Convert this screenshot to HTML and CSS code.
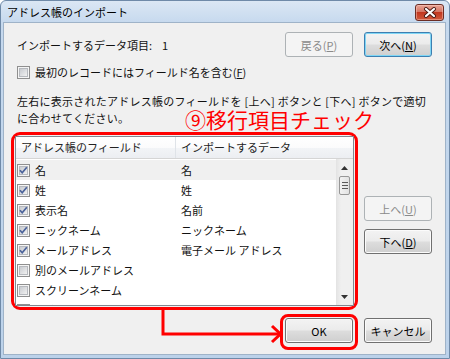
FILE: index.html
```html
<!DOCTYPE html>
<html lang="ja">
<head>
<meta charset="utf-8">
<link rel="stylesheet" href="styles.css">
</head>
<body>
<div class="win">
  <div class="titlebar">
    <span class="title">アドレス帳のインポート</span>
    <span class="close"><svg width="14" height="11" viewBox="0 0 14 11"><path d="M3 2 L11 9 M11 2 L3 9" stroke="#4a1a14" stroke-width="4" stroke-linecap="round" fill="none"/><path d="M3 2 L11 9 M11 2 L3 9" stroke="#fff" stroke-width="2.2" stroke-linecap="round" fill="none"/></svg></span>
  </div>
  <div class="client">
    <div class="row1">
      <span class="count">インポートするデータ項目:<span class="num">1</span></span>
      <div class="btns">
        <span class="btn dis">戻る(<u>P</u>)</span>
        <span class="btn def">次へ(<u>N</u>)</span>
      </div>
    </div>
    <div class="chkrow"><span class="cb"></span><span>最初のレコードにはフィールド名を含む(<u>F</u>)</span></div>
    <p class="desc">左右に表示されたアドレス帳のフィールドを [上へ] ボタンと [下へ] ボタンで適切<br>に合わせてください。</p>
    <div class="mid">
      <div class="hl">
        <div class="list">
          <div class="lhead">
            <span class="hc">アドレス帳のフィールド</span>
            <span class="hc">インポートするデータ</span>
          </div>
          <div class="lbody">
            <div class="rows">
              <div class="row sel"><span class="c1"><span class="cb"><svg viewBox="0 0 13 13"><path d="M3 6.3 L5.2 8.8 L9.8 3.2" stroke="#4a629a" stroke-width="1.7" fill="none"/></svg></span>名</span><span class="c2">名</span></div>
              <div class="row"><span class="c1"><span class="cb"><svg viewBox="0 0 13 13"><path d="M3 6.3 L5.2 8.8 L9.8 3.2" stroke="#4a629a" stroke-width="1.7" fill="none"/></svg></span>姓</span><span class="c2">姓</span></div>
              <div class="row"><span class="c1"><span class="cb"><svg viewBox="0 0 13 13"><path d="M3 6.3 L5.2 8.8 L9.8 3.2" stroke="#4a629a" stroke-width="1.7" fill="none"/></svg></span>表示名</span><span class="c2">名前</span></div>
              <div class="row"><span class="c1"><span class="cb"><svg viewBox="0 0 13 13"><path d="M3 6.3 L5.2 8.8 L9.8 3.2" stroke="#4a629a" stroke-width="1.7" fill="none"/></svg></span>ニックネーム</span><span class="c2">ニックネーム</span></div>
              <div class="row"><span class="c1"><span class="cb"><svg viewBox="0 0 13 13"><path d="M3 6.3 L5.2 8.8 L9.8 3.2" stroke="#4a629a" stroke-width="1.7" fill="none"/></svg></span>メールアドレス</span><span class="c2">電子メール アドレス</span></div>
              <div class="row"><span class="c1"><span class="cb"></span>別のメールアドレス</span><span class="c2"></span></div>
              <div class="row"><span class="c1"><span class="cb"></span>スクリーンネーム</span><span class="c2"></span></div>
              <div class="row"><span class="c1"><span class="cb"></span>勤務先の電話番号</span><span class="c2"></span></div>
            </div>
            <div class="sb">
              <span class="sbtn"><svg width="7" height="4" viewBox="0 0 7 4"><path d="M0 4 L3.5 0 L7 4 Z" fill="#333"/></svg></span>
              <span class="thumb"><i></i><i></i><i></i></span>
              <span class="track"></span>
              <span class="sbtn"><svg width="7" height="4" viewBox="0 0 7 4"><path d="M0 0 L3.5 4 L7 0 Z" fill="#333"/></svg></span>
            </div>
          </div>
        </div>
      </div>
      <div class="side">
        <span class="btn dis">上へ(<u>U</u>)</span>
        <span class="btn">下へ(<u>D</u>)</span>
      </div>
    </div>
    <div class="bottom">
      <div class="hlok"><span class="btn">OK</span></div>
      <span class="btn cancel">キャンセル</span>
    </div>
  </div>
  <div class="note">⑨移行項目チェック</div>
  <svg class="arrow" width="125" height="40" viewBox="0 0 125 40"><path d="M3 0 V24 H120" stroke="#f00" stroke-width="3" fill="none"/><path d="M112 16 L120.5 24 L112 32" stroke="#f00" stroke-width="3" fill="none"/></svg>
</div>
</body>
</html>
```
FILE: styles.css
```css
* { box-sizing: border-box; }
html, body { margin: 0; padding: 0; }
body {
  width: 450px;
  height: 359px;
  overflow: hidden;
  font-family: "Noto Sans CJK JP", "Noto Sans", sans-serif;
  font-size: 11px;
  color: #111;
}
u { text-decoration: underline; text-underline-offset: 1px; }

.win {
  position: relative;
  width: 450px;
  height: 359px;
  background: linear-gradient(#dbe7f4, #c6d9ee 22px, #bcd2ea);
  border: 1px solid #6f8aa8;
  border-radius: 6px 6px 0 0;
  padding: 0 3px 3px 2px;
  display: flex;
  flex-direction: column;
}

.titlebar {
  height: 21px;
  display: flex;
  align-items: flex-start;
  padding-left: 4px;
}
.title {
  line-height: 22px;
  font-size: 11px;
  color: #000;
}
.close {
  margin-left: auto;
  margin-right: 2px;
  margin-top: 3px;
  width: 29px;
  height: 17px;
  border: 1px solid #6b2d24;
  border-radius: 3px;
  background: linear-gradient(#e9a597, #d57664 45%, #c2371f 50%, #d0593c);
  box-shadow: inset 0 0 0 1px rgba(255, 210, 200, 0.45);
  display: flex;
  align-items: center;
  justify-content: center;
}

.client {
  flex: 1;
  background: #f0f0f0;
  border: 1px solid #9fb3c8;
  padding: 9px 13px 0 13px;
  display: flex;
  flex-direction: column;
}

.row1 {
  height: 25px;
  display: flex;
  align-items: center;
  justify-content: space-between;
}
.num { margin-left: 10px; }
.btns { display: flex; gap: 11px; }

.btn {
  width: 68px;
  height: 25px;
  border: 1px solid #707070;
  border-radius: 3px;
  background: linear-gradient(#f3f3f3, #ebebeb 48%, #dddddd 52%, #cfcfcf);
  box-shadow: inset 0 0 0 1px #fbfbfb;
  display: flex;
  align-items: center;
  justify-content: center;
  color: #000;
  line-height: 14px;
}
.btn.dis {
  border-color: #adb2b5;
  background: #f4f4f4;
  box-shadow: none;
  color: #8a8a8a;
}
.btn.def {
  border-color: #3c7fb1;
  box-shadow: inset 0 0 0 1px #7fd6f5;
}

.chkrow {
  margin-top: 8px;
  height: 14px;
  display: flex;
  align-items: center;
  gap: 5px;
  line-height: 14px;
  white-space: nowrap;
}

.cb {
  position: relative;
  flex: none;
  width: 13px;
  height: 13px;
  border: 1px solid #8f8f8f;
  background: #f5f5f5;
}
.cb::before {
  content: "";
  position: absolute;
  left: 1px; top: 1px; right: 1px; bottom: 1px;
  background: linear-gradient(135deg, #c8cbd0, #f1f1f1);
  border: 1px solid #b6b9be;
}
.cb svg {
  position: absolute;
  left: -1px; top: -1px;
  width: 13px; height: 13px;
}

.desc {
  margin: 14px 0 0;
  line-height: 17px;
  white-space: nowrap;
  letter-spacing: 0.25px;
}

.mid {
  margin-top: 5px;
  margin-left: -6px;
  height: 178px;
  display: flex;
  gap: 6px;
}
.hl {
  width: 347px;
  height: 178px;
  border: 3px solid #f00;
  border-radius: 9px;
  padding: 1px;
}
.list {
  height: 100%;
  border: 1px solid #828790;
  background: #fff;
  display: flex;
  flex-direction: column;
}
.lhead {
  height: 22px;
  flex: none;
  display: grid;
  grid-template-columns: 160px 1fr;
  background: linear-gradient(#ffffff, #fbfbfc 50%, #f2f4f7 51%, #eceef2);
  border-bottom: 1px solid #d5d5d5;
}
.hc {
  padding-left: 5px;
  line-height: 21px;
  color: #222;
  white-space: nowrap;
}
.hc:first-child { border-right: 1px solid #dfe3e8; }

.lbody {
  flex: 1;
  display: flex;
  overflow: hidden;
}
.rows {
  flex: 1;
  overflow: hidden;
  padding-top: 1px;
}
.row {
  height: 20px;
  display: grid;
  grid-template-columns: 160px 1fr;
  align-items: center;
}
.row.sel { background: #f0f0f0; }
.c1 {
  display: flex;
  align-items: center;
  gap: 5px;
  padding-left: 1px;
  white-space: nowrap;
}
.c2 { padding-left: 5px; white-space: nowrap; }

.sb {
  width: 17px;
  flex: none;
  background: linear-gradient(90deg, #e3e3e3, #f0f0f0 30%, #f0f0f0);
  display: flex;
  flex-direction: column;
  align-items: center;
}
.sbtn {
  height: 17px;
  width: 17px;
  flex: none;
  display: flex;
  align-items: center;
  justify-content: center;
}
.thumb {
  width: 11px;
  height: 19px;
  flex: none;
  border: 1px solid #979797;
  border-radius: 2px;
  background: linear-gradient(90deg, #f3f3f3, #e2e2e2);
  display: flex;
  flex-direction: column;
  align-items: center;
  justify-content: center;
  gap: 2px;
}
.thumb i {
  display: block;
  width: 6px;
  height: 1px;
  background: #5a5a5a;
}
.track { flex: 1; }

.side {
  width: 68px;
  padding-top: 64px;
  display: flex;
  flex-direction: column;
  gap: 8px;
}

.bottom {
  margin-top: 4px;
  display: flex;
  justify-content: flex-end;
  align-items: flex-start;
  gap: 6px;
}
.hlok {
  border: 3px solid #f00;
  border-radius: 8px;
  padding: 1px 2px 4px;
}
.btn.cancel { margin-top: 4px; }

.note {
  position: absolute;
  left: 184px;
  top: 105px;
  font-size: 21px;
  line-height: 26px;
  color: #f00;
  font-weight: 400;
  white-space: nowrap;
}
.arrow {
  position: absolute;
  left: 159px;
  top: 309px;
}
```
